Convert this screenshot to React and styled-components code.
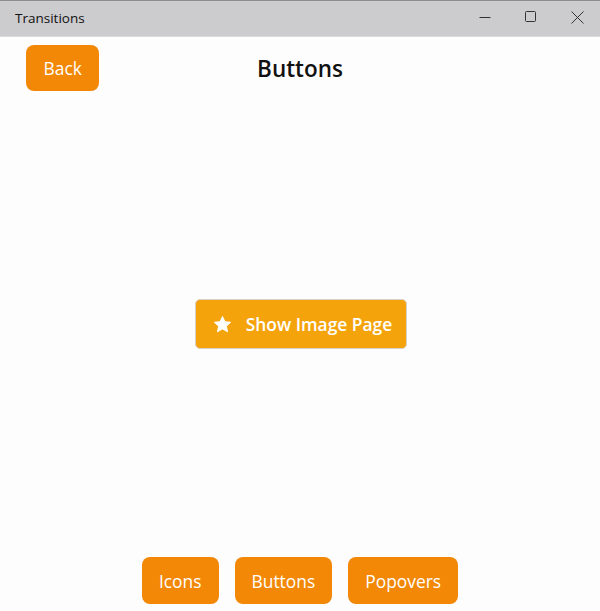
import React from "react";
import styled, { createGlobalStyle } from "styled-components";

const Global = createGlobalStyle`
  html, body { margin: 0; padding: 0; background: #fefdfe; }
  #root { width: 600px; height: 611px; }
  * { box-sizing: border-box; }
`;

const Window = styled.div`
  width: 600px;
  height: 611px;
  display: flex;
  flex-direction: column;
  background: #fefdfe;
  font-family: "Open Sans", "Noto Sans", sans-serif;
  overflow: hidden;
`;

const TitleBar = styled.div`
  height: 37px;
  flex: none;
  display: flex;
  align-items: center;
  background: #cccbcd;
  border-top: 1px solid #8d8d8f;
  border-bottom: 1px solid #dcdcdc;
  padding-left: 15px;
`;

const TitleText = styled.div`
  flex: 1;
  font-size: 13.5px;
  color: #111;
  margin-top: -2px;
`;

const Controls = styled.div`
  display: flex;
  height: 100%;
`;

const Ctrl = styled.div`
  width: 46px;
  display: flex;
  align-items: center;
  justify-content: center;
  color: #333;
  margin-top: -3px;
`;

const Header = styled.div`
  display: grid;
  grid-template-columns: 1fr auto 1fr;
  align-items: center;
  padding: 8px 26px 0 26px;
`;

const PageTitle = styled.h1`
  margin: 0;
  font-size: 22.5px;
  font-weight: 600;
  color: #111;
  margin-top: 1px;
`;

const OrangeButton = styled.button`
  height: ${(p) => p.$h || 47}px;
  padding: 0 ${(p) => p.$px || 17}px;
  border: none;
  border-radius: 8px;
  background: #f28806;
  color: #fff;
  font-family: "Open Sans", "Noto Sans", sans-serif;
  font-size: 17.4px;
  font-weight: 400;
  justify-self: start;
  cursor: pointer;
`;

const Main = styled.div`
  flex: 1;
  display: flex;
  align-items: center;
  justify-content: center;
  padding-left: 2px;
`;

const PrimaryButton = styled.button`
  display: flex;
  align-items: center;
  gap: 14px;
  height: 50px;
  padding: 0 14px 0 17px;
  border: 1px solid #d8d2c6;
  border-radius: 5px;
  background: #f5a30b;
  color: #fff;
  font-family: "Open Sans", "Noto Sans", sans-serif;
  font-size: 17.4px;
  font-weight: 600;
  cursor: pointer;
`;

const Footer = styled.div`
  display: flex;
  justify-content: center;
  gap: 16px;
  padding-bottom: 7px;
`;

const Star = () => (
  <svg width="19" height="19" viewBox="0 0 24 24">
    <path
      fill="#fff"
      d="M12 1.8l3.1 6.6 7.2.8-5.4 4.9 1.5 7.1L12 17.6l-6.4 3.6 1.5-7.1-5.4-4.9 7.2-.8z"
      strokeLinejoin="round"
      stroke="#fff"
      strokeWidth="1.2"
    />
  </svg>
);

export default function App() {
  return (
    <>
      <Global />
      <Window>
        <TitleBar>
          <TitleText>Transitions</TitleText>
          <Controls>
            <Ctrl>
              <svg width="12" height="12" viewBox="0 0 12 12">
                <path d="M0.5 6.5h11" stroke="#333" strokeWidth="1" />
              </svg>
            </Ctrl>
            <Ctrl>
              <svg width="12" height="12" viewBox="0 0 12 12">
                <rect x="0.5" y="0.5" width="10" height="10" rx="1" fill="none" stroke="#333" strokeWidth="1" />
              </svg>
            </Ctrl>
            <Ctrl>
              <svg width="13" height="13" viewBox="0 0 13 13">
                <path d="M0.5 0.5l12 12M12.5 0.5l-12 12" stroke="#333" strokeWidth="1" />
              </svg>
            </Ctrl>
          </Controls>
        </TitleBar>
        <Header>
          <OrangeButton $h={46} $px={17.5}>Back</OrangeButton>
          <PageTitle>Buttons</PageTitle>
          <span />
        </Header>
        <Main>
          <PrimaryButton>
            <Star />
            Show Image Page
          </PrimaryButton>
        </Main>
        <Footer>
          <OrangeButton>Icons</OrangeButton>
          <OrangeButton>Buttons</OrangeButton>
          <OrangeButton>Popovers</OrangeButton>
        </Footer>
      </Window>
    </>
  );
}
